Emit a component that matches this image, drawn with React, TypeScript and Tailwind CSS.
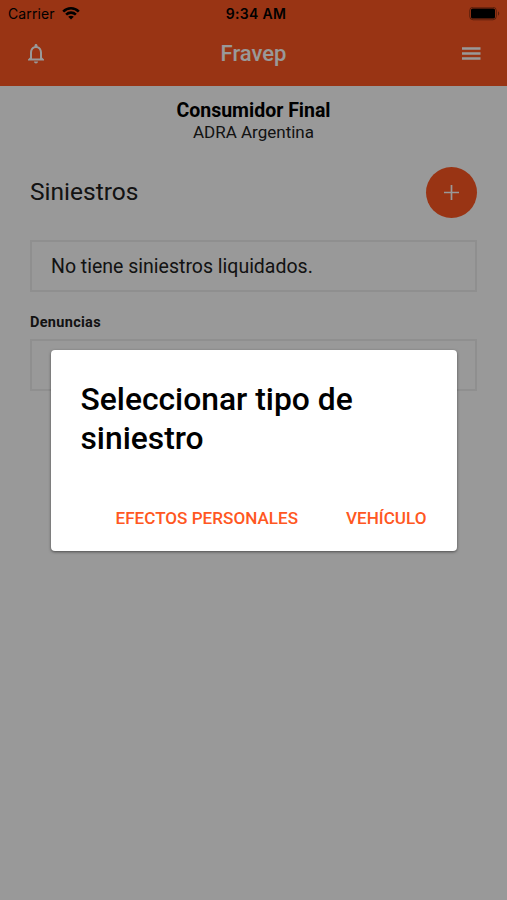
const StatusBar = () => (
  <div className="flex h-[28px] items-center px-2 text-black font-['Inter','Liberation_Sans',sans-serif]">
    <div className="flex flex-1 items-center gap-[7px]">
      <span className="text-[14px] leading-[28px] tracking-[0.1px]">Carrier</span>
      <svg width="18" height="13" viewBox="0 0 18 13" fill="none" stroke="currentColor" strokeWidth="2.6" className="-mt-px">
        <path d="M1.2 4.6C5.6 .2 12.4 .2 16.8 4.6" />
        <path d="M4.1 7.6C6.9 4.9 11.1 4.9 13.9 7.6" />
        <path d="M9 12.6 6.2 9.8C7.8 8.3 10.2 8.3 11.8 9.8Z" fill="currentColor" stroke="none" />
      </svg>
    </div>
    <span className="pl-[2px] text-[14px] font-semibold leading-[28px] tracking-[0.3px]">9:34 AM</span>
    <div className="-mr-[3px] flex flex-1 justify-end">
      <svg width="33" height="14" viewBox="0 0 33 14">
        <rect x=".7" y=".2" width="26.600" height="12.6" rx="3.4" fill="none" stroke="#000" strokeOpacity=".4" />
        <rect x="2" y="1.500" width="24" height="10" rx="1.600" />
        <path d="M29 4.300c1.7.7 1.7 3.7 0 4.400z" fillOpacity=".4" />
      </svg>
    </div>
  </div>
);

const Header = () => (
  <header className="h-[86px] bg-[#ff5722] text-white">
    <StatusBar />
    <div className="flex h-[52px] items-center justify-between px-6">
      <svg width="24" height="24" viewBox="0 0.500 24 24" fill="currentColor">
        <path d="M12 22c1.1 0 2-.9 2-2h-4c0 1.1.9 2 2 2zm6-6v-5c0-3.07-1.63-5.64-4.5-6.32V4c0-.83-.67-1.5-1.5-1.5s-1.5.67-1.5 1.5v.68C7.64 5.36 6 7.92 6 11v5l-2 2v1h16v-1l-2-2zm-2 1H8v-6c0-2.48 1.51-4.5 4-4.5s4 2.02 4 4.500v6z" />
      </svg>
      <h1 className="text-[22px] font-medium leading-[52px]">Fravep</h1>
      <svg width="24" height="24" viewBox="0 0 24 24" fill="currentColor">
        <path d="M3 5.200h18.500v2.500H3zM3 10.200h18.500v2.500H3zM3 15.200h18.500v2.500H3z" />
      </svg>
    </div>
  </header>
);

const Home = () => (
  <main className="px-[30px] text-[#212121]">
    <div className="pt-[13px] text-center">
      <p className="text-[19.500px] font-bold leading-[24px] text-black">Consumidor Final</p>
      <p className="text-[17px] leading-[19px]">ADRA Argentina</p>
    </div>
    <div className="mt-[25px] flex h-[51px] items-center justify-between">
      <h2 className="pb-[2px] text-[24.500px] leading-[49px]">Siniestros</h2>
      <button className="flex size-[51px] items-center justify-center rounded-full bg-[#ff5722] text-white">
        <svg width="15" height="15" viewBox="0 0 15 15" fill="none" stroke="currentColor" strokeWidth="1.700">
          <path d="M7.500 0v15M0 7.500h15" />
        </svg>
      </button>
    </div>
    <div className="mt-[22px] h-[52px] border-2 border-[#eeeeee] px-[19px] text-[19.500px] leading-[49px]">
      No tiene siniestros liquidados.
    </div>
    <h3 className="mt-[20px] text-[14.500px] font-bold leading-[22px] tracking-[0.3px]">Denuncias</h3>
    <div className="mt-[5px] h-[52px] border-2 border-[#eeeeee]" />
  </main>
);

const Dialog = () => (
  <div className="absolute inset-0 flex items-center justify-center bg-black/40">
    <div className="flex h-[201px] w-[406px] flex-col justify-between rounded-[4px] bg-white px-[30px] pb-[21px] pt-[30px] shadow-[0_1px_3px_rgba(0,0,0,0.5)]">
      <h2 className="text-[31.800px] font-medium leading-[39px] text-black">Seleccionar tipo de siniestro</h2>
      <div className="flex justify-end gap-[48px] text-[17.100px] font-medium leading-[24px] text-[#ff5722]">
        <button>EFECTOS PERSONALES</button>
        <button>VEHÍCULO</button>
      </div>
    </div>
  </div>
);

export default function App() {
  return (
    <div className="relative h-[900px] w-[507px] overflow-hidden bg-white font-['Roboto','Liberation_Sans',sans-serif]">
      <Header />
      <Home />
      <Dialog />
    </div>
  );
}
